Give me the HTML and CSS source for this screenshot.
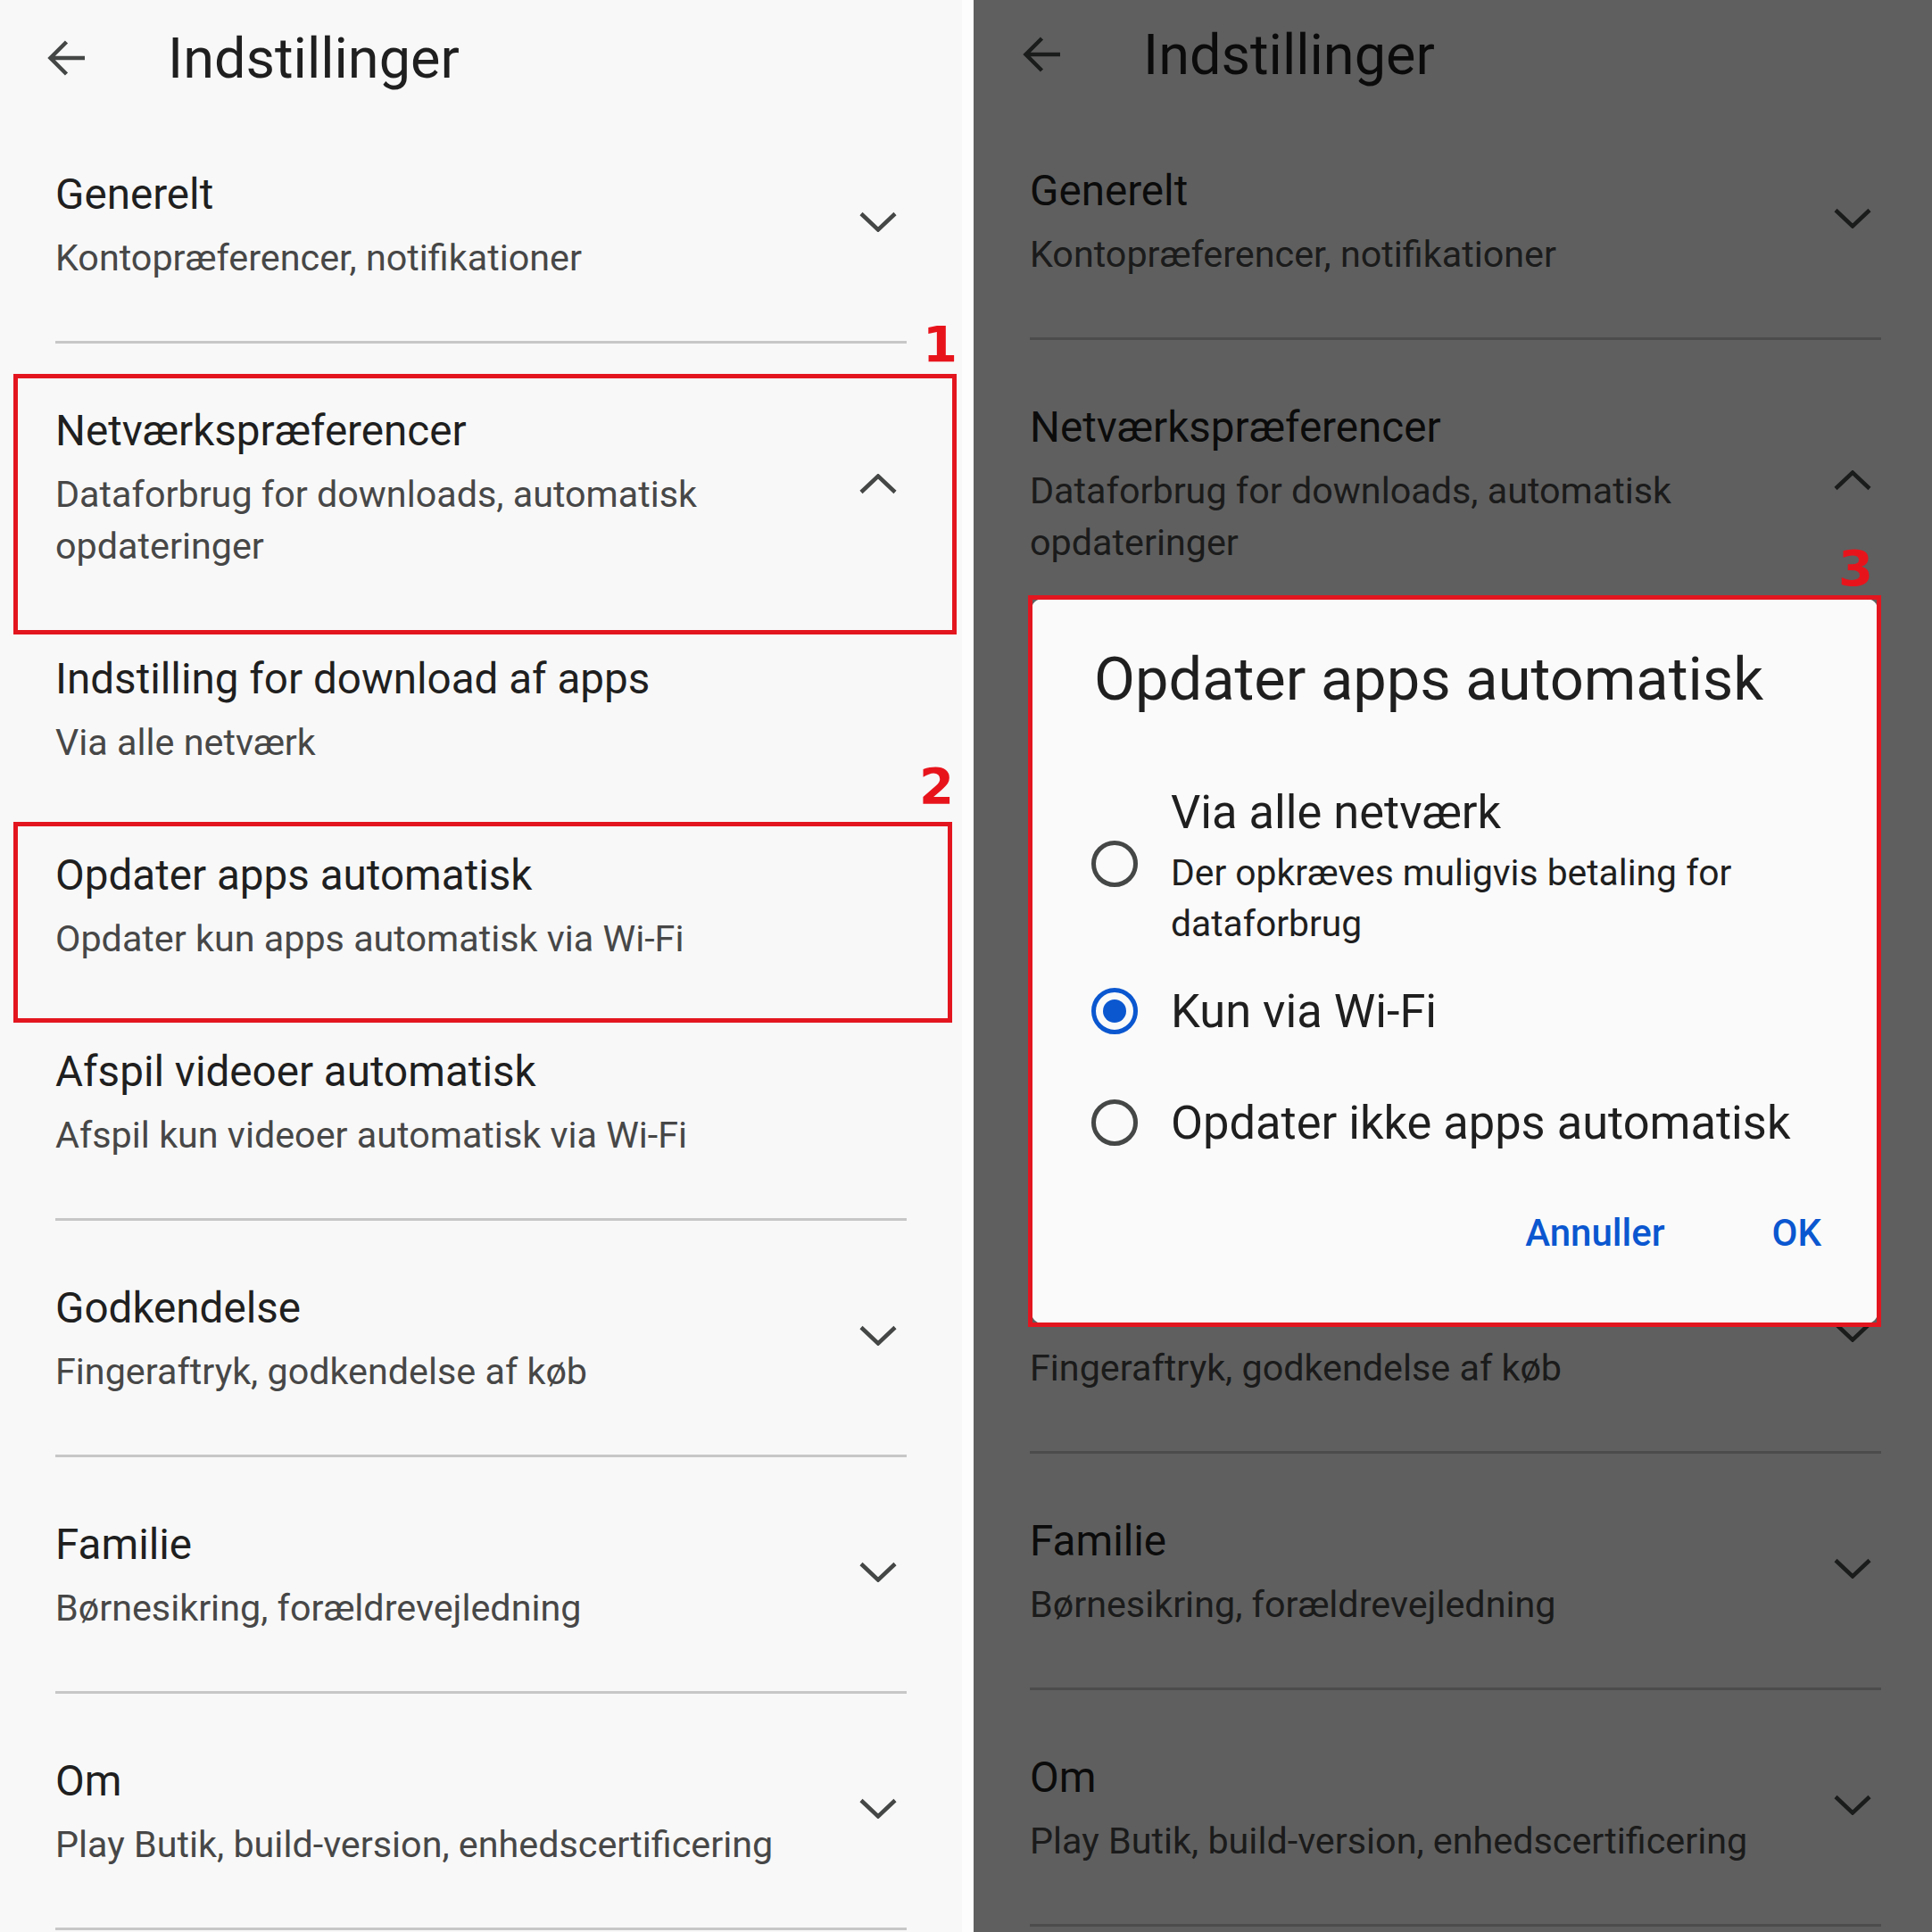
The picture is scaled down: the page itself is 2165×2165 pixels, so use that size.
FILE: index.html
```html
<!DOCTYPE html>
<html lang="da">
<head>
<meta charset="utf-8">
<title>Indstillinger</title>
<link rel="stylesheet" href="styles.css">
</head>
<body>
<div class="screen">
  <section class="phone phone-left">
    <header class="appbar">
      <svg class="back" viewBox="0 0 42 40"><path d="M42 20H4 M21.5 2 L3.5 20 L21.5 38" fill="none" stroke="currentColor" stroke-width="4.5"/></svg>
      <h1 class="appbar-title">Indstillinger</h1>
    </header>
    <div class="list">
      <div class="group">
        <div class="row">
          <div class="texts"><div class="title">Generelt</div><div class="sub">Kontopræferencer, notifikationer</div></div>
          <svg class="chev" viewBox="0 0 42 23"><polyline points="2,2.5 21,20.5 40,2.5" fill="none" stroke="currentColor" stroke-width="4.5"/></svg>
        </div>
      </div>
      <div class="group">
        <div class="row">
          <div class="texts"><div class="title">Netværkspræferencer</div><div class="sub">Dataforbrug for downloads, automatisk opdateringer</div></div>
          <svg class="chev" viewBox="0 0 42 23"><polyline points="2,20.5 21,2.5 40,20.5" fill="none" stroke="currentColor" stroke-width="4.5"/></svg>
        </div>
        <div class="item"><div class="title">Indstilling for download af apps</div><div class="sub">Via alle netværk</div></div>
        <div class="item"><div class="title">Opdater apps automatisk</div><div class="sub">Opdater kun apps automatisk via Wi-Fi</div></div>
        <div class="item"><div class="title">Afspil videoer automatisk</div><div class="sub">Afspil kun videoer automatisk via Wi-Fi</div></div>
      </div>
      <div class="group">
        <div class="row">
          <div class="texts"><div class="title">Godkendelse</div><div class="sub">Fingeraftryk, godkendelse af køb</div></div>
          <svg class="chev" viewBox="0 0 42 23"><polyline points="2,2.5 21,20.5 40,2.5" fill="none" stroke="currentColor" stroke-width="4.5"/></svg>
        </div>
      </div>
      <div class="group">
        <div class="row">
          <div class="texts"><div class="title">Familie</div><div class="sub">Børnesikring, forældrevejledning</div></div>
          <svg class="chev" viewBox="0 0 42 23"><polyline points="2,2.5 21,20.5 40,2.5" fill="none" stroke="currentColor" stroke-width="4.5"/></svg>
        </div>
      </div>
      <div class="group">
        <div class="row">
          <div class="texts"><div class="title">Om</div><div class="sub">Play Butik, build-version, enhedscertificering</div></div>
          <svg class="chev" viewBox="0 0 42 23"><polyline points="2,2.5 21,20.5 40,2.5" fill="none" stroke="currentColor" stroke-width="4.5"/></svg>
        </div>
      </div>
    </div>
    <div class="mark mark-1"></div>
    <div class="mark mark-2"></div>
    <span class="label label-1">1</span>
    <span class="label label-2">2</span>
  </section>

  <section class="phone phone-right">
    <header class="appbar">
      <svg class="back" viewBox="0 0 42 40"><path d="M42 20H4 M21.5 2 L3.5 20 L21.5 38" fill="none" stroke="currentColor" stroke-width="4.5"/></svg>
      <h1 class="appbar-title">Indstillinger</h1>
    </header>
    <div class="list">
      <div class="group">
        <div class="row">
          <div class="texts"><div class="title">Generelt</div><div class="sub">Kontopræferencer, notifikationer</div></div>
          <svg class="chev" viewBox="0 0 42 23"><polyline points="2,2.5 21,20.5 40,2.5" fill="none" stroke="currentColor" stroke-width="4.5"/></svg>
        </div>
      </div>
      <div class="group">
        <div class="row">
          <div class="texts"><div class="title">Netværkspræferencer</div><div class="sub">Dataforbrug for downloads, automatisk opdateringer</div></div>
          <svg class="chev" viewBox="0 0 42 23"><polyline points="2,20.5 21,2.5 40,20.5" fill="none" stroke="currentColor" stroke-width="4.5"/></svg>
        </div>
        <div class="item"><div class="title">Indstilling for download af apps</div><div class="sub">Via alle netværk</div></div>
        <div class="item"><div class="title">Opdater apps automatisk</div><div class="sub">Opdater kun apps automatisk via Wi-Fi</div></div>
        <div class="item"><div class="title">Afspil videoer automatisk</div><div class="sub">Afspil kun videoer automatisk via Wi-Fi</div></div>
      </div>
      <div class="group">
        <div class="row">
          <div class="texts"><div class="title">Godkendelse</div><div class="sub">Fingeraftryk, godkendelse af køb</div></div>
          <svg class="chev" viewBox="0 0 42 23"><polyline points="2,2.5 21,20.5 40,2.5" fill="none" stroke="currentColor" stroke-width="4.5"/></svg>
        </div>
      </div>
      <div class="group">
        <div class="row">
          <div class="texts"><div class="title">Familie</div><div class="sub">Børnesikring, forældrevejledning</div></div>
          <svg class="chev" viewBox="0 0 42 23"><polyline points="2,2.5 21,20.5 40,2.5" fill="none" stroke="currentColor" stroke-width="4.5"/></svg>
        </div>
      </div>
      <div class="group">
        <div class="row">
          <div class="texts"><div class="title">Om</div><div class="sub">Play Butik, build-version, enhedscertificering</div></div>
          <svg class="chev" viewBox="0 0 42 23"><polyline points="2,2.5 21,20.5 40,2.5" fill="none" stroke="currentColor" stroke-width="4.5"/></svg>
        </div>
      </div>
    </div>

    <div class="scrim"></div>
    <div class="dialog">
      <h2 class="dlg-title">Opdater apps automatisk</h2>
      <div class="options">
        <div class="opt opt-first">
          <span class="radio"></span>
          <div class="opt-text">
            <div class="opt-title">Via alle netværk</div>
            <div class="opt-sub">Der opkræves muligvis betaling for dataforbrug</div>
          </div>
        </div>
        <div class="opt">
          <span class="radio on"></span>
          <div class="opt-text"><div class="opt-title">Kun via Wi-Fi</div></div>
        </div>
        <div class="opt">
          <span class="radio"></span>
          <div class="opt-text"><div class="opt-title">Opdater ikke apps automatisk</div></div>
        </div>
      </div>
      <div class="actions">
        <span class="btn">Annuller</span>
        <span class="btn">OK</span>
      </div>
    </div>
    <div class="mark mark-3"></div>
    <span class="label label-3">3</span>
  </section>
</div>
</body>
</html>
```

FILE: styles.css
```css
* {
  box-sizing: border-box;
  margin: 0;
  padding: 0;
}

html,
body {
  width: 2165px;
  height: 2165px;
}

body {
  background: #fdfdfd;
  font-family: Roboto, "Noto Sans", "Liberation Sans", sans-serif;
  overflow: hidden;
}

.screen {
  display: flex;
  gap: 13px;
  height: 2165px;
}

.phone {
  position: relative;
  flex: none;
  height: 2165px;
  background: #f8f8f8;
  overflow: hidden;
}

.phone-left {
  width: 1078px;
}

.phone-right {
  width: 1074px;
}

/* App bar */
.appbar {
  display: flex;
  align-items: center;
  height: 120px;
  padding: 10px 0 0 53px;
}

.phone-right .appbar {
  height: 116px;
  padding: 6px 0 0 55px;
}

.back {
  flex: none;
  width: 42px;
  height: 40px;
  color: #444746;
}

.appbar-title {
  margin-left: 93px;
  font-size: 63px;
  font-weight: 400;
  line-height: 1;
  color: #1f1f1f;
}

/* Settings list */
.list {
  width: 954px;
  margin-left: 62px;
}

.phone-right .list {
  margin-left: 63px;
}

.group {
  padding: 58px 0 64px;
  border-bottom: 3px solid #c7c7c7;
}

.row {
  display: flex;
  align-items: center;
}

.texts {
  flex: 1;
  padding-right: 30px;
}

.title {
  font-size: 47.6px;
  line-height: 80px;
  color: #1f1f1f;
  white-space: nowrap;
}

.sub {
  margin-top: 2px;
  font-size: 41.3px;
  line-height: 58px;
  color: #474747;
}

.chev {
  flex: none;
  width: 42px;
  height: 23px;
  margin-right: 11px;
  color: #444746;
}

.item {
  margin-top: 80px;
}

/* Annotation marks */
.mark {
  position: absolute;
  border: 5px solid #e3161f;
}

.mark-1 {
  left: 15px;
  top: 419px;
  width: 1057px;
  height: 292px;
}

.mark-2 {
  left: 15px;
  top: 921px;
  width: 1052px;
  height: 225px;
}

.mark-3 {
  left: 61px;
  top: 667px;
  width: 956px;
  height: 820px;
}

.label {
  position: absolute;
  font-family: "DejaVu Sans", sans-serif;
  font-weight: 700;
  font-size: 56px;
  line-height: 56px;
  color: #e8141c;
}

.label-1 {
  left: 1034px;
  top: 358px;
}

.label-2 {
  left: 1030px;
  top: 853px;
}

.label-3 {
  left: 969px;
  top: 609px;
}

/* Dialog */
.scrim {
  position: absolute;
  inset: 0;
  background: rgba(0, 0, 0, 0.615);
}

.dialog {
  position: absolute;
  left: 65px;
  top: 671px;
  width: 948px;
  height: 812px;
  padding: 50px 63px 0 70px;
  background: #fafafa;
  border-radius: 12px;
}

.dlg-title {
  font-size: 66.8px;
  font-weight: 400;
  line-height: 80px;
  color: #1f1f1f;
  white-space: nowrap;
}

.options {
  display: flex;
  flex-direction: column;
  margin-top: 71px;
}

.opt {
  display: flex;
  align-items: center;
  min-height: 125px;
  margin-left: -3px;
}

.opt-first {
  margin-bottom: 6px;
}

.radio {
  flex: none;
  display: flex;
  align-items: center;
  justify-content: center;
  width: 52px;
  height: 52px;
  margin-right: 37px;
  border: 5px solid #444746;
  border-radius: 50%;
}

.radio.on {
  border-color: #0b57d0;
}

.radio.on::after {
  content: "";
  width: 26px;
  height: 26px;
  border-radius: 50%;
  background: #0b57d0;
}

.opt-title {
  font-size: 52.4px;
  line-height: 76px;
  color: #1f1f1f;
  white-space: nowrap;
}

.opt-sub {
  max-width: 700px;
  margin-top: 2px;
  font-size: 40.8px;
  line-height: 57px;
  color: #1f1f1f;
}

.actions {
  display: flex;
  justify-content: flex-end;
  gap: 120px;
  margin-top: 32px;
}

.btn {
  font-size: 42px;
  font-weight: 500;
  line-height: 60px;
  color: #0b57d0;
}
```
